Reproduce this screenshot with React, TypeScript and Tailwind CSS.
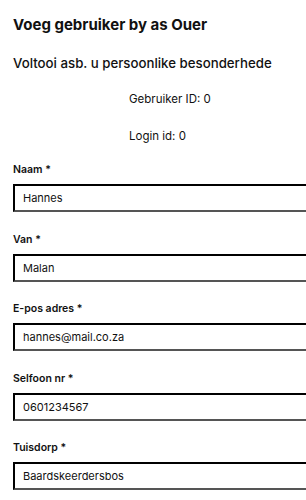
import React from 'react';

const fields = [
  { label: 'Naam *', value: 'Hannes' },
  { label: 'Van *', value: 'Malan' },
  { label: 'E-pos adres *', value: 'hannes@mail.co.za' },
  { label: 'Selfoon nr *', value: '0601234567' },
  { label: 'Tuisdorp *', value: 'Baardskeerdersbos' },
];

export default function App() {
  return (
    <div className="w-[306px] h-[500px] overflow-hidden bg-white text-[#111] font-['Inter',sans-serif]">
      <div className="pt-[15px] pl-[13px] w-[340px]">
        <h1 className="text-[15px] leading-5 font-bold">Voeg gebruiker by as Ouer</h1>
        <h2 className="mt-[19px] text-[13.25px] leading-[18px] font-medium">
          Voltooi asb. u persoonlike besonderhede
        </h2>
        <p className="mt-[19px] ml-[116px] text-[11.5px] leading-4">Gebruiker ID: 0</p>
        <p className="mt-[21px] ml-[116px] text-[11.5px] leading-4">Login id: 0</p>

        <div className="mt-[19px] flex flex-col gap-[20.5px]">
          {fields.map((f) => (
            <div key={f.label} className="flex flex-col gap-[7px]">
              <label className="text-[10.5px] leading-[14px] font-semibold">{f.label}</label>
              <input
                readOnly
                value={f.value}
                className="w-[320px] h-[28px] px-[8px] text-[11px] text-[#111] border-2 [border-style:inset] border-[#555] outline-none"
              />
            </div>
          ))}
        </div>
      </div>
    </div>
  );
}
